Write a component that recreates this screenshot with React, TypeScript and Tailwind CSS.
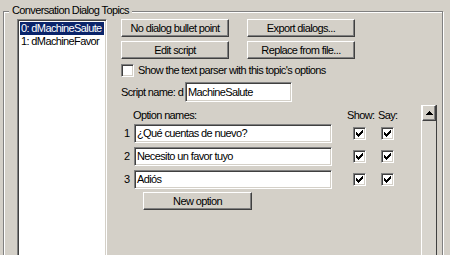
import React from 'react';

const raised =
  'border border-t-white border-l-white border-b-[#404040] border-r-[#404040] shadow-[inset_-1px_-1px_0_#808080] bg-[#d4d0c8]';
const sunken =
  'border border-t-[#808080] border-l-[#808080] border-b-white border-r-white shadow-[inset_1px_1px_0_#404040,inset_-1px_-1px_0_#d4d0c8] bg-white';

const CheckMark = () => (
  <svg width="7" height="7" viewBox="0 0 7 7" shapeRendering="crispEdges">
    <path
      d="M6 0h1v1H6zM5 1h2v1H5zM0 2h1v1H0zM4 2h3v1H4zM0 3h2v1H0zM3 3h3v1H3zM0 4h5v1H0zM1 5h3v1H1zM2 6h1v1H2z"
      fill="#000"
    />
  </svg>
);

const Checkbox = ({ checked }: { checked?: boolean }) => (
  <span className={`${sunken} flex h-[13px] w-[13px] shrink-0 items-center justify-center`}>
    {checked && <CheckMark />}
  </span>
);

const Button = ({ label, className }: { label: string; className?: string }) => (
  <div className={`${raised} flex h-[18px] items-center justify-center ${className ?? ''}`}>
    <span className="leading-[13px]">{label}</span>
  </div>
);

const options = ['¿Qué cuentas de nuevo?', 'Necesito un favor tuyo', 'Adiós'];

export default function App() {
  return (
    <div className="h-[255px] w-[450px] overflow-hidden bg-[#d4d0c8] pt-[11px] pl-[3px] font-['Liberation_Sans',Arial,sans-serif] text-[11px] leading-[13px] tracking-[-0.62px] text-black">
      {/* group box */}
      <div className="relative h-[260px] w-[440px] border border-[#808080] shadow-[inset_1px_1px_0_#fff,1px_1px_0_#fff]">
        <span className="absolute top-[-8px] left-[5px] bg-[#d4d0c8] px-[3px]">Conversation Dialog Topics</span>

        <div className="flex pt-[7px] pl-[13px]">
          {/* topic list */}
          <div className={`${sunken} h-[250px] w-[90px] shrink-0 p-[2px]`}>
            <div className="h-[13px] bg-[#0a246a] pl-[1px] text-white">0: dMachineSalute</div>
            <div className="h-[13px] pl-[1px]">1: dMachineFavor</div>
          </div>

          <div className="ml-[14px] flex w-[316px] flex-col">
            <div className="grid grid-cols-[108px_108px] gap-x-[18px] gap-y-[4px]">
              <Button label="No dialog bullet point" />
              <Button label="Export dialogs..." />
              <Button label="Edit script" />
              <Button label="Replace from file..." />
            </div>

            <div className="mt-[5px] flex h-[13px] items-center gap-[4px]">
              <Checkbox />
              <span>Show the text parser with this topic's options</span>
            </div>

            <div className="mt-[5px] flex items-center">
              <span className="w-[64px]">Script name: d</span>
              <div className={`${sunken} flex h-[20px] w-[107px] items-center pl-[2px]`}>MachineSalute</div>
            </div>

            {/* options panel */}
            <div className="mt-[3px] flex h-[160px]">
              <div className="flex flex-1 flex-col pt-[4px]">
                <div className="flex h-[14px]">
                  <span className="w-[226px] pl-[12px]">Option names:</span>
                  <span className="w-[31px]">Show:</span>
                  <span>Say:</span>
                </div>
                <div className="mt-[1px] flex flex-col gap-[4px]">
                  {options.map((opt, i) => (
                    <div key={opt} className="flex h-[19px] items-center">
                      <span className="w-[13px] pl-[3px]">{i + 1}</span>
                      <div className={`${sunken} flex h-[19px] w-[198px] items-center pl-[2px]`}>{opt}</div>
                      <span className="ml-[21px]">
                        <Checkbox checked />
                      </span>
                      <span className="ml-[15px]">
                        <Checkbox checked />
                      </span>
                    </div>
                  ))}
                </div>
                <Button label="New option" className="mt-[3px] ml-[22px] w-[109px]" />
              </div>

              {/* scrollbar */}
              <div className="flex w-[16px] flex-col border-l border-l-white border-r border-r-[#404040] bg-[#d8d5ce]">
                <div className={`${raised} flex h-[16px] items-center justify-center`}>
                  <svg width="7" height="4" viewBox="0 0 7 4" shapeRendering="crispEdges">
                    <path d="M3 0h1v1H3zM2 1h3v1H2zM1 2h5v1H1zM0 3h7v1H0z" fill="#000" />
                  </svg>
                </div>
              </div>
            </div>
          </div>
        </div>
      </div>
    </div>
  );
}
